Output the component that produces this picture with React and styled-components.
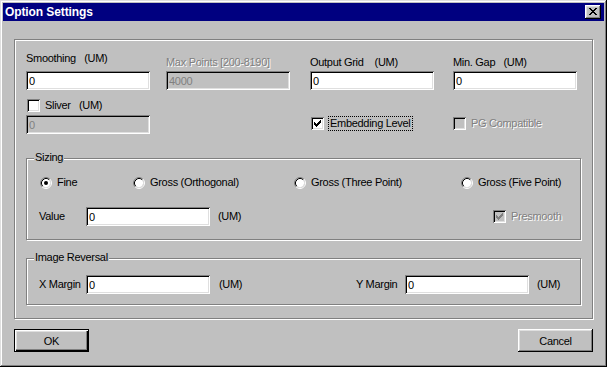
import React from "react";
import styled, { createGlobalStyle } from "styled-components";

const GlobalStyle = createGlobalStyle`
  html, body { margin: 0; padding: 0; background: #c0c0c0; }
  body {
    font-family: "Liberation Sans", Arial, sans-serif;
    font-size: 11px;
    color: #000;
  }
  *, *::before, *::after { box-sizing: border-box; }
`;

const raised =
  "inset -1px -1px 0 #000, inset 1px 1px 0 #fff, inset -2px -2px 0 #808080, inset 2px 2px 0 #dfdfdf";
const sunken =
  "inset 1px 1px 0 #808080, inset -1px -1px 0 #fff, inset 2px 2px 0 #000, inset -2px -2px 0 #dfdfdf";

const Window = styled.div`
  width: 607px;
  height: 367px;
  padding: 3px;
  background: #c0c0c0;
  display: flex;
  flex-direction: column;
  box-shadow: inset -1px -1px 0 #000, inset 1px 1px 0 #dfdfdf,
    inset -2px -2px 0 #808080, inset 2px 2px 0 #fff;
`;

const TitleBar = styled.div`
  flex: none;
  height: 18px;
  background: #000080;
  display: flex;
  align-items: center;
  justify-content: space-between;
  padding: 0 3px 0 2px;
`;

const Title = styled.span`
  color: #fff;
  font-weight: bold;
  font-size: 12px;
  line-height: 18px;
  letter-spacing: -0.1px;
`;

const CloseButton = styled.button`
  width: 16px;
  height: 14px;
  margin: 0;
  padding: 0 0 1px 0;
  border: 0;
  background: #c0c0c0;
  box-shadow: ${raised};
  display: flex;
  align-items: center;
  justify-content: center;
  svg { display: block; }
`;

const DialogBody = styled.div`
  flex: 1;
  display: flex;
  flex-direction: column;
  padding: 18px 11px 12px 11px;
  letter-spacing: -0.3px;
`;

const Etched = styled.div`
  border: 1px solid #808080;
  box-shadow: 1px 1px 0 #fff, inset 1px 1px 0 #fff;
`;

const OuterFrame = styled(Etched)`
  height: 280px;
  padding: 0 11px;
  display: flex;
  flex-direction: column;
`;

const TopGrid = styled.div`
  display: grid;
  grid-template-columns: 140px 144px 143px 1fr;
  padding-top: 12px;
`;

const Cell = styled.div`
  grid-column: ${(p) => p.$col};
  grid-row: ${(p) => p.$row};
  align-self: ${(p) => p.$align || "start"};
  margin: ${(p) => p.$mt || 0}px 0 ${(p) => p.$mb || 0}px ${(p) => p.$ml || 0}px;
`;

const Label = styled.span`
  display: block;
  line-height: 13px;
  white-space: pre;
  color: ${(p) => (p.$disabled ? "#808080" : "#000")};
  text-shadow: ${(p) => (p.$disabled ? "1px 1px 0 #fff" : "none")};
  padding-left: ${(p) => p.$pl || 0}px;
`;

const FocusLabel = styled(Label)`
  border: 1px dotted #000;
  padding: 0 1px;
  margin-left: -1px;
`;

const TextBox = styled.input`
  display: block;
  width: 124px;
  height: 19px;
  margin: 0;
  padding: 0 3px;
  border: 0;
  outline: none;
  font-family: inherit;
  font-size: 11px;
  letter-spacing: -0.3px;
  background: ${(p) => (p.disabled ? "#c0c0c0" : "#fff")};
  color: ${(p) => (p.disabled ? "#808080" : "#000")};
  -webkit-text-fill-color: ${(p) => (p.disabled ? "#808080" : "#000")};
  opacity: 1;
  box-shadow: ${sunken};
`;

const CheckItem = styled.label`
  display: flex;
  align-items: center;
  gap: 5px;
  height: 15px;
`;

const CheckBox = styled.span`
  flex: none;
  width: 13px;
  height: 13px;
  display: flex;
  align-items: center;
  justify-content: center;
  background: ${(p) => (p.$disabled ? "#c0c0c0" : "#fff")};
  box-shadow: ${sunken};
  svg { display: block; }
`;

const GroupBox = styled(Etched)`
  position: relative;
  height: ${(p) => p.$h}px;
  margin-top: ${(p) => p.$mt}px;
  padding-top: ${(p) => p.$pt}px;
`;

const Legend = styled.span`
  position: absolute;
  top: -8px;
  left: 7px;
  padding: 0 1px;
  line-height: 13px;
  background: #c0c0c0;
`;

const RadioGrid = styled.div`
  display: grid;
  grid-template-columns: 93px 161px 167px 1fr;
  padding-left: 13px;
`;

const RadioItem = styled.label`
  display: flex;
  align-items: flex-start;
  gap: 5px;
  height: 13px;
  line-height: 13px;
  svg { display: block; margin-top: 1px; flex: none; }
`;

const FieldRow = styled.div`
  display: grid;
  grid-template-columns: ${(p) => p.$cols};
  align-items: center;
  padding-left: 12px;
  margin-top: ${(p) => p.$mt || 0}px;
`;

const Footer = styled.div`
  display: flex;
  justify-content: space-between;
  margin-top: 10px;
`;

const Button = styled.button`
  width: 75px;
  height: 23px;
  margin: 0;
  padding: 0;
  font-family: inherit;
  font-size: 11px;
  letter-spacing: -0.3px;
  color: #000;
  background: #c0c0c0;
  border: ${(p) => (p.$default ? "1px solid #000" : "0")};
  box-shadow: ${(p) =>
    p.$default
      ? "inset 1px 1px 0 #fff, inset -1px -1px 0 #000, inset -2px -2px 0 #808080, inset 2px 2px 0 #dfdfdf"
      : raised};
`;

const CloseGlyph = () => (
  <svg width="8" height="7" viewBox="0 0 8 7" shapeRendering="crispEdges">
    <path
      fill="#000"
      d="M0 0h2v1H0z M6 0h2v1H6z M1 1h2v1H1z M5 1h2v1H5z M2 2h4v1H2z M3 3h2v1H3z M2 4h4v1H2z M1 5h2v1H1z M5 5h2v1H5z M0 6h2v1H0z M6 6h2v1H6z"
    />
  </svg>
);

const checkPath = [2, 3, 4, 3, 2, 1, 0].map((y, x) => `M${x} ${y}h1v3h-1z`).join(" ");

const CheckMark = ({ color }) => (
  <svg width="7" height="7" viewBox="0 0 7 7" shapeRendering="crispEdges">
    <path fill={color} d={checkPath} />
  </svg>
);

const Check = ({ checked, disabled, children, focus }) => (
  <CheckItem>
    <CheckBox $disabled={disabled}>
      {checked && <CheckMark color={disabled ? "#808080" : "#000"} />}
    </CheckBox>
    {focus ? (
      <FocusLabel>{children}</FocusLabel>
    ) : (
      <Label $disabled={disabled}>{children}</Label>
    )}
  </CheckItem>
);

const RadioDot = ({ checked }) => (
  <svg width="12" height="12" viewBox="0 0 12 12">
    <circle cx="6" cy="6" r="4.2" fill="#fff" />
    <path d="M2.11 9.89 A5.5 5.5 0 0 1 9.89 2.11" stroke="#808080" fill="none" />
    <path d="M9.89 2.11 A5.5 5.5 0 0 1 2.11 9.89" stroke="#fff" fill="none" />
    <path d="M2.82 9.18 A4.5 4.5 0 0 1 9.18 2.82" stroke="#000" fill="none" />
    <path d="M9.18 2.82 A4.5 4.5 0 0 1 2.82 9.18" stroke="#dfdfdf" fill="none" />
    {checked && <circle cx="6" cy="6" r="2" fill="#000" />}
  </svg>
);

const Radio = ({ checked, children }) => (
  <RadioItem>
    <RadioDot checked={checked} />
    <Label>{children}</Label>
  </RadioItem>
);

export default function App() {
  return (
    <>
      <GlobalStyle />
      <Window>
        <TitleBar>
          <Title>Option Settings</Title>
          <CloseButton aria-label="Close">
            <CloseGlyph />
          </CloseButton>
        </TitleBar>
        <DialogBody>
          <OuterFrame>
            <TopGrid>
              <Cell $col={1} $row={1} $align="end" $mb={6}>
                <Label>{"Smoothing   (UM)"}</Label>
              </Cell>
              <Cell $col={2} $row={1} $align="end" $mb={2}>
                <Label $disabled>Max Points [200-8190]</Label>
              </Cell>
              <Cell $col={3} $row={1} $align="end" $mb={2}>
                <Label>{"Output Grid    (UM)"}</Label>
              </Cell>
              <Cell $col={4} $row={1} $align="end" $mb={2}>
                <Label>{"Min. Gap   (UM)"}</Label>
              </Cell>

              <Cell $col={1} $row={2}>
                <TextBox defaultValue="0" />
              </Cell>
              <Cell $col={2} $row={2}>
                <TextBox defaultValue="4000" disabled />
              </Cell>
              <Cell $col={3} $row={2}>
                <TextBox defaultValue="0" />
              </Cell>
              <Cell $col={4} $row={2}>
                <TextBox defaultValue="0" />
              </Cell>

              <Cell $col={1} $row={3} $mt={8} $ml={1}>
                <Check>{"Sliver   (UM)"}</Check>
              </Cell>

              <Cell $col={1} $row={4} $mt={2}>
                <TextBox defaultValue="0" disabled />
              </Cell>
              <Cell $col={3} $row={4} $mt={3} $ml={1}>
                <Check checked focus>
                  Embedding Level
                </Check>
              </Cell>
              <Cell $col={4} $row={4} $mt={3}>
                <Check disabled>PG Compatible</Check>
              </Cell>
            </TopGrid>

            <GroupBox $h={82} $mt={24} $pt={17}>
              <Legend>Sizing</Legend>
              <RadioGrid>
                <Radio checked>Fine</Radio>
                <Radio>Gross (Orthogonal)</Radio>
                <Radio>Gross (Three Point)</Radio>
                <Radio>Gross (Five Point)</Radio>
              </RadioGrid>
              <FieldRow $cols="47px 124px 283px 1fr" $mt={18}>
                <Label>Value</Label>
                <TextBox defaultValue="0" />
                <Label $pl={8}>(UM)</Label>
                <Check checked disabled>
                  Presmooth
                </Check>
              </FieldRow>
            </GroupBox>

            <GroupBox $h={47} $mt={18} $pt={16}>
              <Legend>Image Reversal</Legend>
              <FieldRow $cols="47px 124px 146px 49px 124px 1fr">
                <Label>X Margin</Label>
                <TextBox defaultValue="0" />
                <Label $pl={9}>(UM)</Label>
                <Label>Y Margin</Label>
                <TextBox defaultValue="0" />
                <Label $pl={8}>(UM)</Label>
              </FieldRow>
            </GroupBox>
          </OuterFrame>

          <Footer>
            <Button $default>OK</Button>
            <Button>Cancel</Button>
          </Footer>
        </DialogBody>
      </Window>
    </>
  );
}
